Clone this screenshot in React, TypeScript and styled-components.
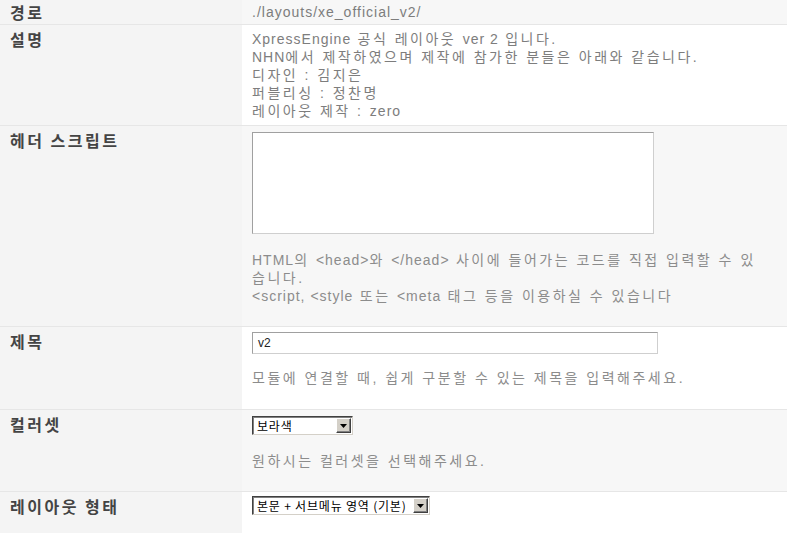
import React from "react";
import styled, { createGlobalStyle } from "styled-components";

const GlobalStyle = createGlobalStyle`
  html, body {
    margin: 0;
    padding: 0;
    background: #ffffff;
  }
  body {
    font-family: "Liberation Sans", "Noto Sans CJK KR", sans-serif;
  }
`;

const Table = styled.div`
  width: 787px;
  display: flex;
  flex-direction: column;
`;

const Row = styled.div<{ $shade: boolean; $height: number }>`
  display: flex;
  height: ${(p) => p.$height}px;
  border-bottom: 1px solid #e6e6e6;
  background: ${(p) => (p.$shade ? "#f7f7f7" : "#ffffff")};
  box-sizing: border-box;
`;

const Label = styled.div<{ $top: number }>`
  width: 242px;
  flex-shrink: 0;
  background: #f4f4f4;
  box-sizing: border-box;
  padding: ${(p) => p.$top}px 0 0 10px;
  color: #444444;
  font-family: "Noto Sans CJK KR", sans-serif;
  font-size: 16px;
  font-weight: bold;
  letter-spacing: 2.5px;
  line-height: 18px;
`;

const Cell = styled.div<{ $top: number }>`
  flex: 1;
  box-sizing: border-box;
  padding: ${(p) => p.$top}px 18px 0 10px;
  color: #7d7d7d;
  font-size: 14px;
  letter-spacing: 2.5px;
  line-height: 18px;
`;

/* latin runs are much narrower in the original bitmap font */
const En = styled.span`
  letter-spacing: 1px;
`;

const Line = styled.div``;

const Help = styled.p<{ $gap: number }>`
  margin: ${(p) => p.$gap}px 0 0;
  color: #8c8c8c;
  font-size: 14px;
  letter-spacing: 2.5px;
  line-height: 18px;
`;

const TextArea = styled.div`
  width: 402px;
  height: 102px;
  box-sizing: border-box;
  background: #ffffff;
  border: 1px solid #cfcfcf;
  border-top-color: #a0a0a0;
  border-left-color: #a0a0a0;
`;

const TextInput = styled.div`
  width: 406px;
  height: 22px;
  box-sizing: border-box;
  background: #ffffff;
  border: 1px solid #cfcfcf;
  border-top-color: #a0a0a0;
  border-left-color: #a0a0a0;
  padding: 0 5px;
  color: #222;
  font-size: 12px;
  letter-spacing: 0;
  line-height: 20px;
`;

const SelectBox = styled.div<{ $width: number }>`
  width: ${(p) => p.$width}px;
  height: 19px;
  box-sizing: border-box;
  display: flex;
  align-items: center;
  background: #ffffff;
  border: 1px solid #d4d0c8;
  border-top-color: #404040;
  border-left-color: #404040;
  box-shadow: inset 1px 1px 0 #808080;
  padding: 0 1px 0 4px;
  color: #000;
  font-family: "Noto Sans CJK KR", sans-serif;
  font-size: 12px;
  letter-spacing: 0.8px;
`;

const SelectText = styled.span`
  flex: 1;
  white-space: nowrap;
  line-height: 17px;
`;

const ArrowButton = styled.span`
  width: 15px;
  height: 15px;
  box-sizing: border-box;
  display: flex;
  align-items: center;
  justify-content: center;
  background: #d4d0c8;
  border: 1px solid #404040;
  border-top-color: #ffffff;
  border-left-color: #ffffff;
  box-shadow: inset -1px -1px 0 #808080;
`;

const Select: React.FC<{ value: string; width: number }> = ({ value, width }) => (
  <SelectBox $width={width}>
    <SelectText>{value}</SelectText>
    <ArrowButton>
      <svg width="7" height="4" viewBox="0 0 7 4">
        <path d="M0 0h7L3.5 4z" fill="#000" />
      </svg>
    </ArrowButton>
  </SelectBox>
);

export default function App() {
  return (
    <>
      <GlobalStyle />
      <Table>
        <Row $shade $height={25}>
          <Label $top={3}>경로</Label>
          <Cell $top={3}>
            <En>./layouts/xe_official_v2/</En>
          </Cell>
        </Row>
        <Row $shade={false} $height={101}>
          <Label $top={5}>설명</Label>
          <Cell $top={5}>
            <Line>
              <En>XpressEngine</En> 공식 레이아웃 <En>ver 2</En> 입니다.
            </Line>
            <Line>
              <En>NHN</En>에서 제작하였으며 제작에 참가한 분들은 아래와 같습니다.
            </Line>
            <Line>디자인 : 김지은</Line>
            <Line>퍼블리싱 : 정찬명</Line>
            <Line>
              레이아웃 제작 : <En>zero</En>
            </Line>
          </Cell>
        </Row>
        <Row $shade $height={201}>
          <Label $top={5}>헤더 스크립트</Label>
          <Cell $top={6}>
            <TextArea />
            <Help $gap={17}>
              <En>HTML</En>의 <En>&lt;head&gt;</En>와 <En>&lt;/head&gt;</En> 사이에 들어가는 코드를
              직접 입력할 수 있습니다.
              <br />
              <En>&lt;script, &lt;style</En> 또는 <En>&lt;meta</En> 태그 등을 이용하실 수 있습니다
            </Help>
          </Cell>
        </Row>
        <Row $shade={false} $height={83}>
          <Label $top={5}>제목</Label>
          <Cell $top={5}>
            <TextInput>v2</TextInput>
            <Help $gap={15}>모듈에 연결할 때, 쉽게 구분할 수 있는 제목을 입력해주세요.</Help>
          </Cell>
        </Row>
        <Row $shade $height={82}>
          <Label $top={5}>컬러셋</Label>
          <Cell $top={6}>
            <Select value="보라색" width={101} />
            <Help $gap={17}>원하시는 컬러셋을 선택해주세요.</Help>
          </Cell>
        </Row>
        <Row $shade={false} $height={45}>
          <Label $top={5}>레이아웃 형태</Label>
          <Cell $top={4}>
            <Select value="본문 + 서브메뉴 영역 (기본)" width={178} />
          </Cell>
        </Row>
      </Table>
    </>
  );
}
